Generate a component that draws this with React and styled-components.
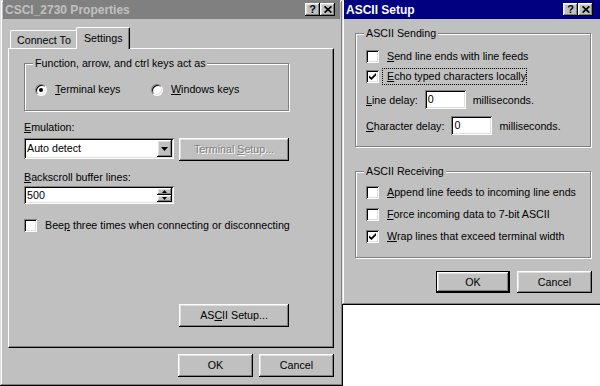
import React from "react";
import styled, { createGlobalStyle, css } from "styled-components";

const FACE = "#c0c0c0";

const GlobalStyle = createGlobalStyle`
  html, body { margin: 0; padding: 0; background: #fff; }
  body {
    font-family: "Liberation Sans", Arial, sans-serif;
    font-size: 10.7px;
    color: #000;
  }
  * { box-sizing: border-box; }
`;

const raised = css`
  box-shadow: inset -1px -1px #000, inset 1px 1px #fff, inset -2px -2px #808080,
    inset 2px 2px #dfdfdf;
`;

const sunken = css`
  box-shadow: inset 1px 1px #808080, inset -1px -1px #fff, inset 2px 2px #000,
    inset -2px -2px #dfdfdf;
`;

const Desktop = styled.div`
  display: flex;
  align-items: flex-start;
  width: 600px;
  height: 386px;
  overflow: hidden;
  background: #fff;
`;

const Window = styled.section`
  position: relative;
  z-index: ${(p) => (p.$front ? 2 : 1)};
  flex: 0 0 auto;
  width: ${(p) => p.$w}px;
  height: ${(p) => p.$h}px;
  margin-left: ${(p) => (p.$front ? -1 : 0)}px;
  padding: 0 ${(p) => p.$pad}px;
  background: ${FACE};
  display: flex;
  flex-direction: column;
  box-shadow: inset -1px -1px #000, inset 1px 1px #dfdfdf, inset -2px -2px #808080,
    inset 2px 2px #fff;
`;

const TitleBar = styled.header`
  flex: 0 0 19px;
  display: flex;
  align-items: center;
  justify-content: space-between;
  padding: 0 ${(p) => p.$padRight}px 0 2px;
  background: ${(p) => (p.$active ? "#000080" : "#808080")};
  color: ${(p) => (p.$active ? "#fff" : "#c0c0c0")};
  font-weight: bold;
  font-size: 12px;
`;

const TitleText = styled.span`
  white-space: nowrap;
`;

const TitleButtons = styled.div`
  display: flex;
`;

const TitleButton = styled.span`
  width: 15px;
  height: 13px;
  display: grid;
  place-items: center;
  background: ${FACE};
  color: #000;
  font-size: 11px;
  font-weight: bold;
  line-height: 1;
  ${raised};
`;

const TabStrip = styled.div`
  position: relative;
  z-index: 1;
  display: flex;
  align-items: flex-end;
  height: 21px;
  margin: 8px 0 0 7px;
`;

const Tab = styled.div`
  position: relative;
  z-index: ${(p) => (p.$active ? 2 : 1)};
  height: ${(p) => (p.$active ? 22 : 18)}px;
  margin: 0 ${(p) => (p.$active ? -2 : 0)}px ${(p) => (p.$active ? -1 : 0)}px;
  padding: ${(p) => (p.$active ? "0 6px 1px 7px" : "0 6px")};
  display: flex;
  align-items: center;
  background: ${FACE};
  border-top: 1px solid #fff;
  border-left: 1px solid #fff;
  border-right: 1px solid #000;
  border-radius: 2px 2px 0 0;
  box-shadow: inset -1px 0 #808080;
  white-space: nowrap;
`;

const TabPanel = styled.div`
  width: 326px;
  height: 300px;
  margin-left: 5px;
  border: 1px solid;
  border-color: #fff #000 #000 #fff;
  box-shadow: inset -1px -1px #808080;
  display: flex;
  flex-direction: column;
  padding: 8px 44px 20px 15px;
`;

const Group = styled.fieldset`
  margin: ${(p) => p.$mt || 0}px 0 0;
  padding: 0;
  min-width: 0;
  width: ${(p) => (p.$w ? `${p.$w}px` : "auto")};
  border: 1px solid #808080;
  box-shadow: inset 1px 1px #fff, 1px 1px #fff;
`;

const Legend = styled.legend`
  margin-left: 8px;
  padding: 0 2px;
  line-height: 13px;
  background: ${FACE};
`;

const GroupBody = styled.div`
  display: flex;
  flex-direction: column;
  gap: ${(p) => p.$gap}px;
  padding: ${(p) => p.$pad};
`;

const RadioGrid = styled.div`
  display: grid;
  grid-template-columns: 116px auto;
`;

const Choice = styled.label`
  display: flex;
  align-items: center;
  gap: 8px;
  height: 13px;
  line-height: 13px;
  white-space: nowrap;
`;

const Radio = styled.span`
  flex: 0 0 12px;
  width: 12px;
  height: 12px;
  border-radius: 50%;
  background: #fff;
  border: 1px solid;
  border-color: #808080 #fff #fff #808080;
  box-shadow: inset 1px 1px #000, inset -1px -1px #dfdfdf;
  display: grid;
  place-items: center;
  &::after {
    content: "";
    width: 4px;
    height: 4px;
    border-radius: 50%;
    background: #000;
    display: ${(p) => (p.$on ? "block" : "none")};
  }
`;

const Box = styled.span`
  flex: 0 0 13px;
  width: 13px;
  height: 13px;
  background: #fff;
  ${sunken};
  display: grid;
  place-items: center;
`;

const FocusText = styled.span`
  margin: -2px 0 -2px -5px;
  padding: 1px 0 1px 4px;
  border: 1px dotted #000;
  line-height: 13px;
`;

const Key = styled.u`
  text-decoration: underline;
  text-underline-offset: 1px;
`;

const FieldLabel = styled.div`
  margin-top: ${(p) => p.$mt}px;
  line-height: 13px;
  white-space: nowrap;
`;

const ControlRow = styled.div`
  display: flex;
  align-items: flex-start;
  gap: 5px;
  margin-top: ${(p) => p.$mt}px;
`;

const Field = styled.div`
  flex: 0 0 auto;
  width: ${(p) => p.$w}px;
  height: ${(p) => p.$h}px;
  background: #fff;
  ${sunken};
  display: flex;
  align-items: center;
  padding: 2px 2px 2px 3px;
  white-space: nowrap;
`;

const FieldText = styled.span`
  flex: 1;
  line-height: 13px;
`;

const ArrowButton = styled.span`
  flex: 0 0 15px;
  height: 17px;
  background: ${FACE};
  ${raised};
  display: grid;
  place-items: center;
`;

const SpinStack = styled.span`
  flex: 0 0 15px;
  height: 14px;
  display: flex;
  flex-direction: column;
`;

const SpinButton = styled.span`
  flex: 1;
  background: ${FACE};
  ${raised};
  display: grid;
  place-items: center;
`;

const Button = styled.button`
  flex: 0 0 auto;
  width: ${(p) => p.$w}px;
  height: ${(p) => p.$h || 23}px;
  margin: 0;
  padding: 0;
  font: inherit;
  line-height: 13px;
  background: ${FACE};
  color: ${(p) => (p.disabled ? "#808080" : "#000")};
  text-shadow: ${(p) => (p.disabled ? "1px 1px #fff" : "none")};
  border: ${(p) => (p.$default ? "1px solid #000" : "0")};
  ${raised};
`;

const ButtonRow = styled.div`
  display: flex;
  justify-content: flex-end;
  gap: ${(p) => p.$gap}px;
  margin-top: ${(p) => p.$mt}px;
  padding-right: ${(p) => p.$pr}px;
`;

const PanelFooter = styled.div`
  margin-top: auto;
  display: flex;
  justify-content: flex-end;
`;

const DialogBody = styled.div`
  display: flex;
  flex-direction: column;
  padding-left: ${(p) => p.$pl}px;
`;

const DelayRow = styled.div`
  display: flex;
  align-items: center;
  gap: 7px;
  white-space: nowrap;
`;

const CloseGlyph = () => (
  <svg width="8" height="7" viewBox="0 0 8 7">
    <path d="M0.6 0.4 L7.4 6.6 M7.4 0.4 L0.6 6.6" stroke="#000" strokeWidth="1.7" />
  </svg>
);

const CheckGlyph = () => (
  <svg width="7" height="7" viewBox="0 0 7 7">
    <polygon points="0,2.4 2.4,4.6 7,0 7,2.4 2.4,7 0,4.7" fill="#000" />
  </svg>
);

const DownTri = ({ w = 7, h = 4 }) => (
  <svg width={w} height={h} viewBox={`0 0 ${w} ${h}`}>
    <polygon points={`0,0 ${w},0 ${w / 2},${h}`} fill="#000" />
  </svg>
);

const UpTri = ({ w = 5, h = 3 }) => (
  <svg width={w} height={h} viewBox={`0 0 ${w} ${h}`}>
    <polygon points={`0,${h} ${w},${h} ${w / 2},0`} fill="#000" />
  </svg>
);

const Title = ({ text, active, padRight }) => (
  <TitleBar $active={active} $padRight={padRight}>
    <TitleText>{text}</TitleText>
    <TitleButtons>
      <TitleButton>?</TitleButton>
      <TitleButton>
        <CloseGlyph />
      </TitleButton>
    </TitleButtons>
  </TitleBar>
);

const Check = ({ on, children }) => (
  <Choice>
    <Box>{on && <CheckGlyph />}</Box>
    {children}
  </Choice>
);

function PropertiesWindow() {
  return (
    <Window $w={343} $h={386} $pad={3}>
      <Title text="CSCI_2730 Properties" padRight={5} />
      <TabStrip>
        <Tab>Connect To</Tab>
        <Tab $active>Settings</Tab>
      </TabStrip>
      <TabPanel>
        <Group>
          <Legend>Function, arrow, and ctrl keys act as</Legend>
          <GroupBody $pad="13px 0 14px 10px" $gap={0}>
            <RadioGrid>
              <Choice>
                <Radio $on />
                <span>
                  <Key>T</Key>erminal keys
                </span>
              </Choice>
              <Choice>
                <Radio />
                <span>
                  <Key>W</Key>indows keys
                </span>
              </Choice>
            </RadioGrid>
          </GroupBody>
        </Group>

        <FieldLabel $mt={10}>
          <Key>E</Key>mulation:
        </FieldLabel>
        <ControlRow $mt={4}>
          <Field $w={150} $h={21}>
            <FieldText>Auto detect</FieldText>
            <ArrowButton>
              <DownTri />
            </ArrowButton>
          </Field>
          <Button $w={110} disabled>
            Terminal <Key>S</Key>etup...
          </Button>
        </ControlRow>

        <FieldLabel $mt={10}>
          <Key>B</Key>ackscroll buffer lines:
        </FieldLabel>
        <ControlRow $mt={2}>
          <Field $w={150} $h={18}>
            <FieldText>500</FieldText>
            <SpinStack>
              <SpinButton>
                <UpTri />
              </SpinButton>
              <SpinButton>
                <DownTri w={5} h={3} />
              </SpinButton>
            </SpinStack>
          </Field>
        </ControlRow>

        <ControlRow $mt={15}>
          <Check>
            <span>
              Bee<Key>p</Key> three times when connecting or disconnecting
            </span>
          </Check>
        </ControlRow>

        <PanelFooter>
          <Button $w={110}>
            AS<Key>C</Key>II Setup...
          </Button>
        </PanelFooter>
      </TabPanel>
      <ButtonRow $gap={6} $mt={6} $pr={6}>
        <Button $w={75}>OK</Button>
        <Button $w={75}>Cancel</Button>
      </ButtonRow>
    </Window>
  );
}

function AsciiWindow() {
  return (
    <Window $w={262} $h={305} $pad={2} $front>
      <Title text="ASCII Setup" active padRight={9} />
      <DialogBody $pl={11}>
        <Group $w={236} $mt={8}>
          <Legend>ASCII Sending</Legend>
          <GroupBody $pad="10px 0 11px 10px" $gap={7}>
            <Check>
              <span>
                <Key>S</Key>end line ends with line feeds
              </span>
            </Check>
            <Check on>
              <FocusText>
                <Key>E</Key>cho typed characters locally
              </FocusText>
            </Check>
            <DelayRow>
              <span>
                <Key>L</Key>ine delay:
              </span>
              <Field $w={41} $h={19}>
                <FieldText>0</FieldText>
              </Field>
              <span>milliseconds.</span>
            </DelayRow>
            <DelayRow>
              <span>
                <Key>C</Key>haracter delay:
              </span>
              <Field $w={41} $h={19}>
                <FieldText>0</FieldText>
              </Field>
              <span>milliseconds.</span>
            </DelayRow>
          </GroupBody>
        </Group>

        <Group $w={236} $mt={18}>
          <Legend>ASCII Receiving</Legend>
          <GroupBody $pad="8px 0 14px 10px" $gap={9}>
            <Check>
              <span>
                <Key>A</Key>ppend line feeds to incoming line ends
              </span>
            </Check>
            <Check>
              <span>
                <Key>F</Key>orce incoming data to 7-bit ASCII
              </span>
            </Check>
            <Check on>
              <span>
                <Key>W</Key>rap lines that exceed terminal width
              </span>
            </Check>
          </GroupBody>
        </Group>
      </DialogBody>
      <ButtonRow $gap={7} $mt={13} $pr={10}>
        <Button $w={74} $h={22} $default>
          OK
        </Button>
        <Button $w={75} $h={22}>
          Cancel
        </Button>
      </ButtonRow>
    </Window>
  );
}

export default function App() {
  return (
    <>
      <GlobalStyle />
      <Desktop>
        <PropertiesWindow />
        <AsciiWindow />
      </Desktop>
    </>
  );
}
